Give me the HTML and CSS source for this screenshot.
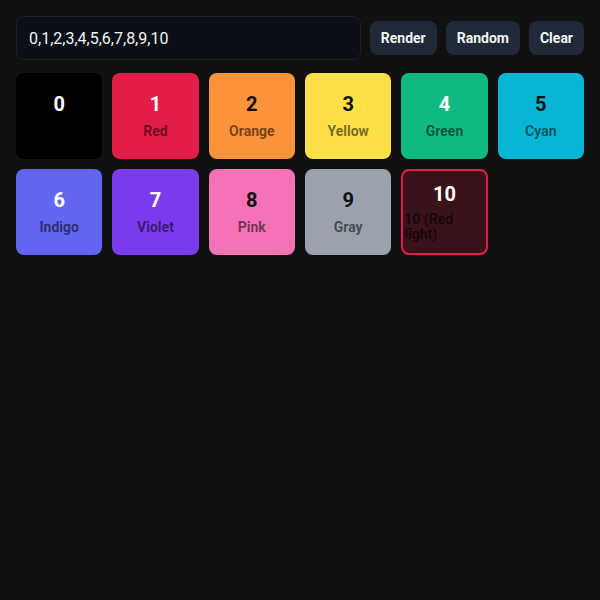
FILE: index.html
```html
<!DOCTYPE html>
<html lang="en">
<head>
    <meta charset="UTF-8">
    <meta name="viewport" content="width=device-width, initial-scale=1.0">
    <title>Color Tiles</title>
    <link rel="stylesheet" href="styles.css">
</head>
<body>

<div class="app">
    <div class="controls">
        <input type="text" id="codes" class="codes-input" value="0,1,2,3,4,5,6,7,8,9,10">
        <button type="button" class="btn">Render</button>
        <button type="button" class="btn">Random</button>
        <button type="button" class="btn">Clear</button>
    </div>

    <div class="grid">
        <div class="tile tile-black"><div class="num">0</div><div class="name"></div></div>
        <div class="tile tile-red"><div class="num">1</div><div class="name">Red</div></div>
        <div class="tile tile-orange dark-num"><div class="num">2</div><div class="name">Orange</div></div>
        <div class="tile tile-yellow dark-num"><div class="num">3</div><div class="name">Yellow</div></div>
        <div class="tile tile-green"><div class="num">4</div><div class="name">Green</div></div>
        <div class="tile tile-cyan dark-num"><div class="num">5</div><div class="name">Cyan</div></div>
        <div class="tile tile-indigo"><div class="num">6</div><div class="name">Indigo</div></div>
        <div class="tile tile-violet"><div class="num">7</div><div class="name">Violet</div></div>
        <div class="tile tile-pink dark-num"><div class="num">8</div><div class="name">Pink</div></div>
        <div class="tile tile-gray dark-num"><div class="num">9</div><div class="name">Gray</div></div>
        <div class="tile tile-redlight"><div class="num">10</div><div class="name name-left">10 (Red light)</div></div>
    </div>
</div>

</body>
</html>
```

FILE: styles.css
```css
/* Page */
body {
    margin: 0; background-color: #111111;
    font-family: Roboto, "Liberation Sans", sans-serif;
}
.app { padding: 16px; }

/* Top bar: input + buttons */
.controls { display: flex; align-items: center; gap: 9px; }
.codes-input {
    flex: 1; height: 44px; box-sizing: border-box;
    padding: 0 12px; font-family: Roboto, sans-serif; font-size: 16px;
    color: #f1f5f9; background: #0a1016;
    border: 1px solid #1a222b; border-radius: 8px; outline: none;
}
.btn {
    height: 34px; padding: 0 11px;
    background: #1f2937; color: #f3f4f6;
    border: none; border-radius: 8px;
    font-family: Roboto, sans-serif; font-size: 14px; font-weight: bold;
    cursor: pointer;
}
.btn:hover { background: #283445; }

/* Tile grid */
.grid {
    display: grid; grid-template-columns: repeat(6, 1fr);
    gap: 10px; margin-top: 13px;
}
.tile {
    height: 86px; box-sizing: border-box; border-radius: 8px;
    display: flex; flex-direction: column; justify-content: center;
    align-items: center; gap: 6px; padding: 0 2px;
}
.num { font-size: 20px; font-weight: bold; color: #fff; line-height: 24px; }
.dark-num .num { color: #111; }
.name {
    font-size: 14px; font-weight: bold; line-height: 18px; min-height: 18px;
    color: rgba(0,0,0,0.55); text-align: center;
}
.name-left { align-self: stretch; text-align: left; line-height: 15px; margin-left: -1px; }

.tile-black { background: #000; }
.tile-red { background: #e11d48; }
.tile-orange { background: #fb923c; }
.tile-yellow { background: #fde047; }
.tile-green { background: #10b981; }
.tile-cyan { background: #06b6d4; }
.tile-indigo { background: #6366f1; }
.tile-violet { background: #7c3aed; }
.tile-pink { background: #f472b6; }
.tile-gray { background: #9ca3af; }
.tile-redlight { background: #3a1219; border: 2px solid #e11d48; }
.tile-redlight .name { color: rgba(0,0,0,0.6); }
```
